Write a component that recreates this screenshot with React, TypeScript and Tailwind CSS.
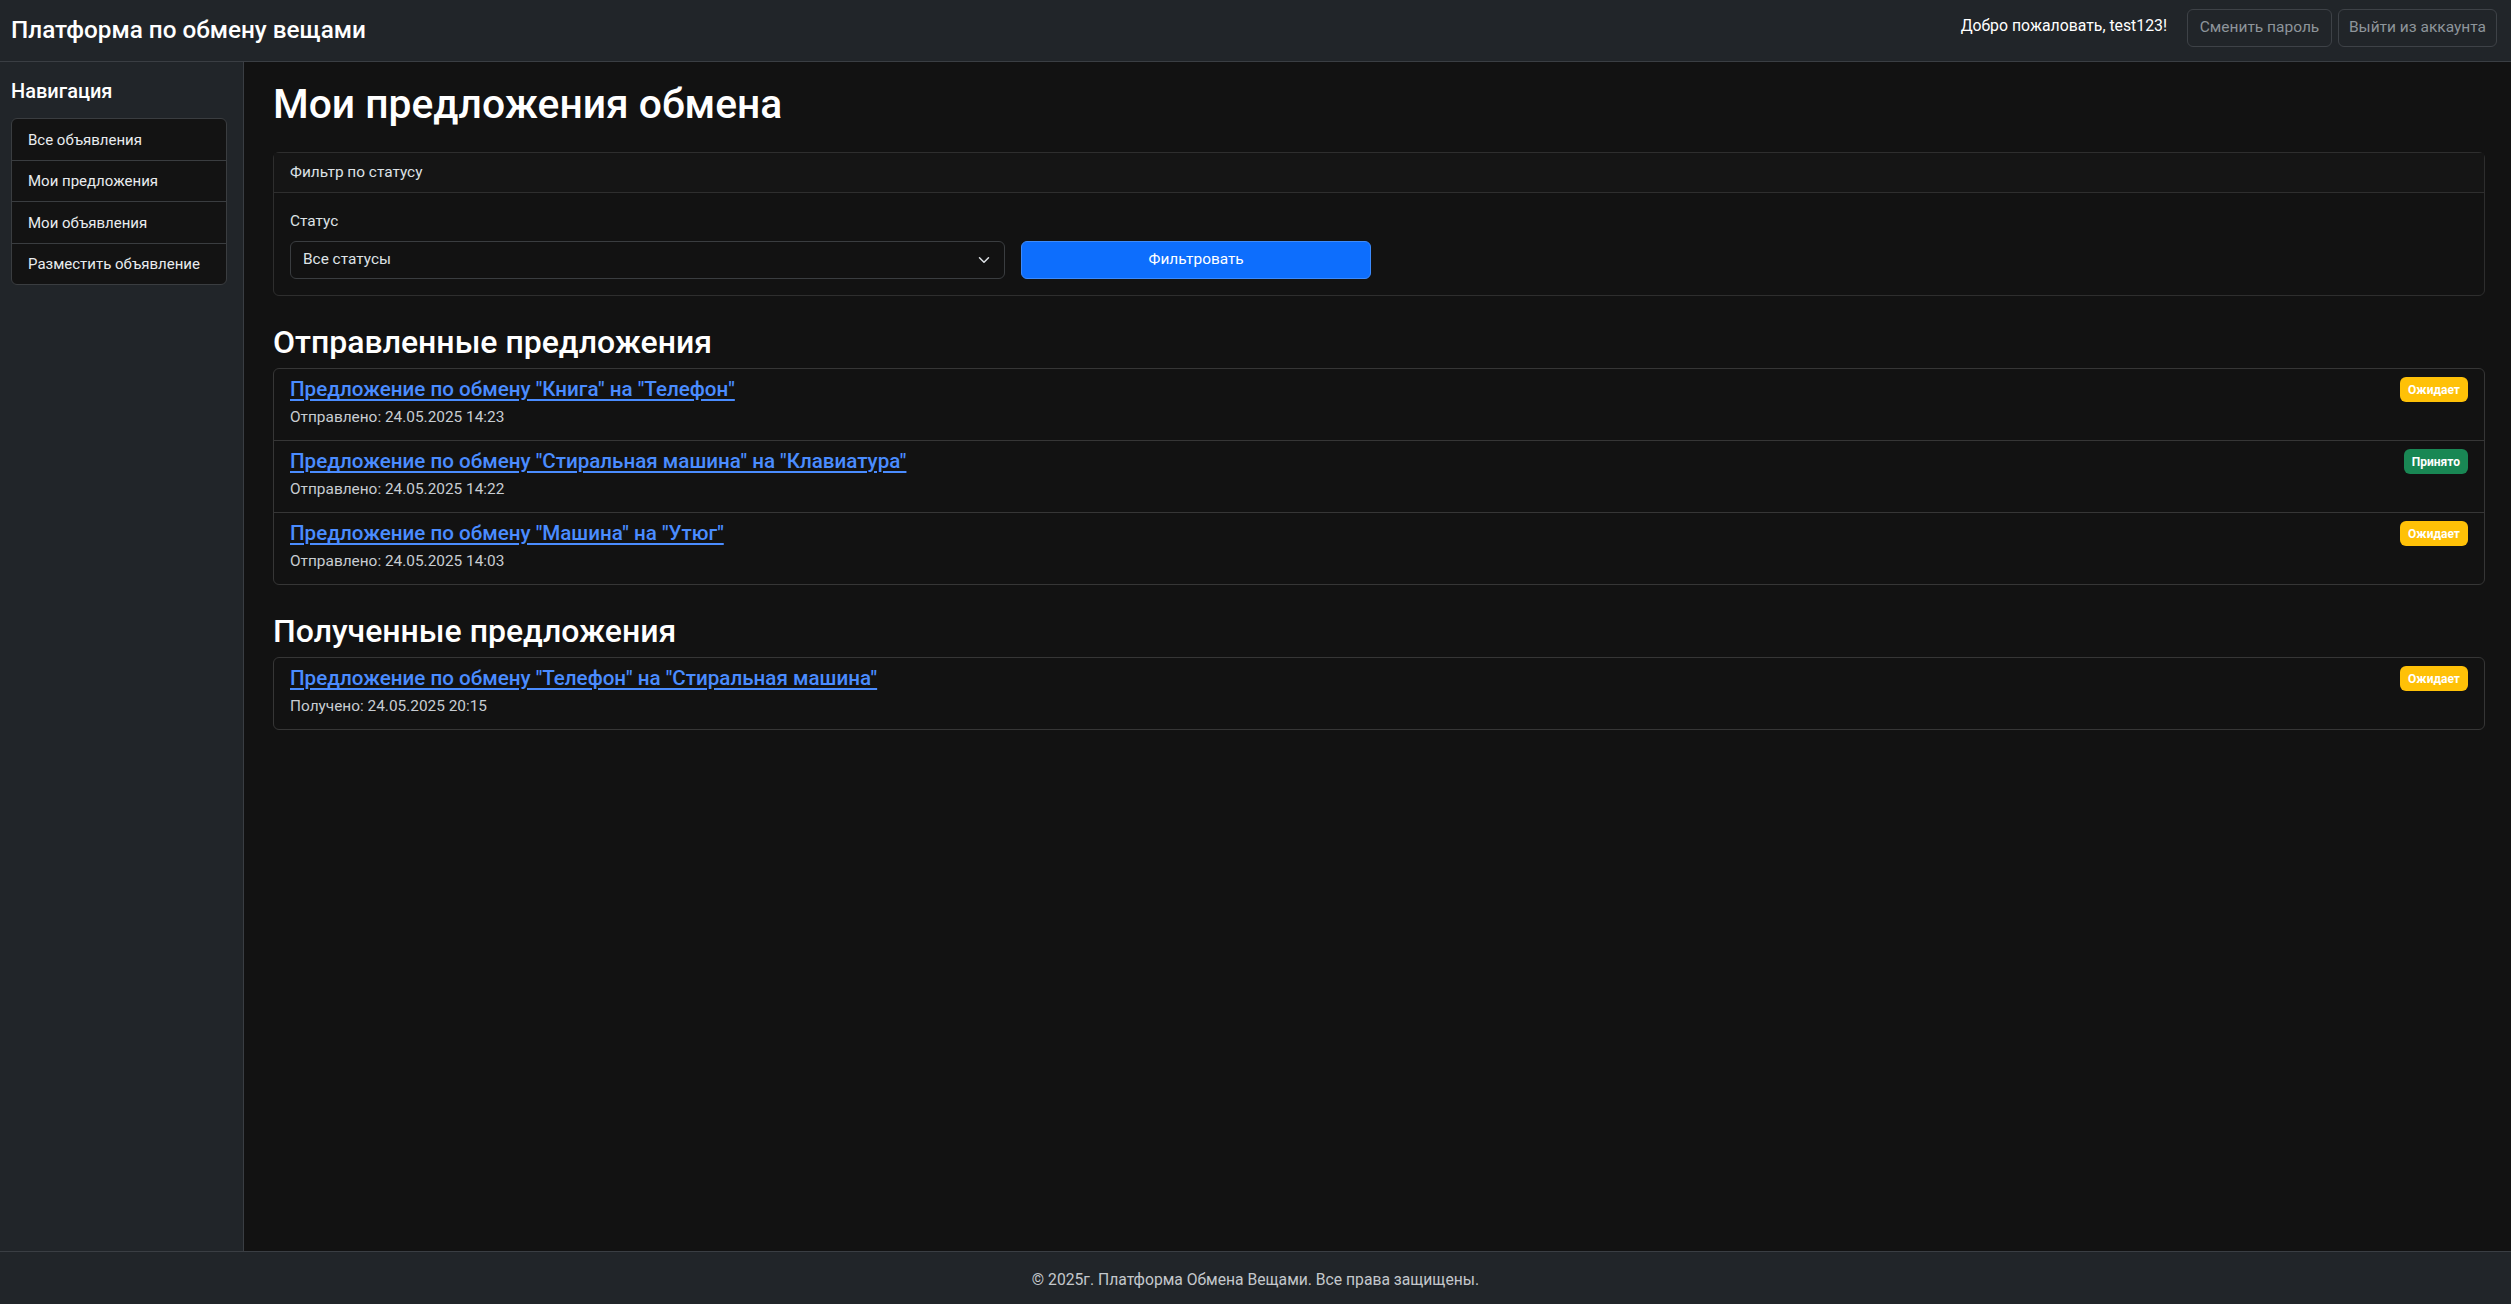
import React from "react";

type Offer = { title: string; date: string; status: "wait" | "ok" };

const sent: Offer[] = [
  { title: 'Предложение по обмену "Книга" на "Телефон"', date: "Отправлено: 24.05.2025 14:23", status: "wait" },
  { title: 'Предложение по обмену "Стиральная машина" на "Клавиатура"', date: "Отправлено: 24.05.2025 14:22", status: "ok" },
  { title: 'Предложение по обмену "Машина" на "Утюг"', date: "Отправлено: 24.05.2025 14:03", status: "wait" },
];

const received: Offer[] = [
  { title: 'Предложение по обмену "Телефон" на "Стиральная машина"', date: "Получено: 24.05.2025 20:15", status: "wait" },
];

function Badge({ status }: { status: "wait" | "ok" }) {
  return status === "wait" ? (
    <span className="flex h-[25px] items-center rounded-[6px] bg-[#ffc107] px-[8px] text-[12px] font-bold text-white">
      Ожидает
    </span>
  ) : (
    <span className="flex h-[25px] items-center rounded-[6px] bg-[#198754] px-[8px] text-[12px] font-bold text-white">
      Принято
    </span>
  );
}

function OfferList({ items }: { items: Offer[] }) {
  return (
    <div className="rounded-[6px] border border-[#363636]">
      {items.map((o, i) => (
        <div
          key={i}
          className={`flex items-start justify-between px-[16px] pt-[8px] pb-[12px] ${i > 0 ? "border-t border-[#363636]" : ""}`}
        >
          <div>
            <div className="mb-[6px] text-[20.6px] font-medium leading-[24px]">
              <a href="#" className="text-[#4a8cff] underline underline-offset-[3px]">
                {o.title}
              </a>
            </div>
            <div className="text-[15.4px] leading-[21px] text-[#c8cdd2]">{o.date}</div>
          </div>
          <Badge status={o.status} />
        </div>
      ))}
    </div>
  );
}

export default function App() {
  return (
    <div className="flex min-h-screen flex-col bg-[#121212] font-['Roboto','Noto_Sans',sans-serif] text-[16px] text-[#dee2e6]">
      <header className="flex h-[62px] shrink-0 items-center justify-between border-b border-[#3a3e43] bg-[#212529] pl-[11px] pr-[14px]">
        <div className="text-[24.3px] font-medium text-white">Платформа по обмену вещами</div>
        <div className="-mt-[6px] flex items-center">
          <span className="mr-[20px] -mt-[3px] text-[15.8px] text-white">Добро пожаловать, test123!</span>
          <button className="h-[38px] w-[145px] rounded-[6px] border border-[#3e4247] text-[15.5px] text-[#8e959b]">
            Сменить пароль
          </button>
          <button className="ml-[6px] h-[38px] w-[159px] rounded-[6px] border border-[#3e4247] text-[15.5px] text-[#8e959b]">
            Выйти из аккаунта
          </button>
        </div>
      </header>

      <div className="flex flex-1">
        <aside className="w-[244px] shrink-0 border-r border-[#3a3e43] bg-[#212529] pl-[11px] pr-[16px] pt-[17px]">
          <h5 className="mb-[15px] text-[20px] font-medium leading-[24px] text-white">Навигация</h5>
          <div className="overflow-hidden rounded-[6px] border border-[#3a3d40] bg-[#131313]">
            {["Все объявления", "Мои предложения", "Мои объявления", "Разместить объявление"].map((t, i) => (
              <div
                key={t}
                className={`px-[16px] pb-[7.5px] pt-[8.5px] text-[15px] leading-[24.5px] text-[#e9ecef] ${i > 0 ? "border-t border-[#3a3d40]" : ""}`}
              >
                {t}
              </div>
            ))}
          </div>
        </aside>

        <main className="flex-1 pb-[40px] pl-[29px] pr-[26px] pt-[18px]">
          <h1 className="mb-[23px] text-[40.8px] font-medium leading-[49px] text-white">Мои предложения обмена</h1>

          <div className="rounded-[6px] border border-[#2e2e2e]">
            <div className="border-b border-[#2e2e2e] bg-[#151515] px-[16px] py-[8px] text-[15.4px] leading-[23px]">
              Фильтр по статусу
            </div>
            <div className="grid grid-cols-12 items-end gap-x-[16px] p-[16px]">
              <div className="col-span-4">
                <div className="mb-[8px] text-[15.4px] leading-[24px]">Статус</div>
                <div className="flex h-[38px] items-center justify-between rounded-[6px] border border-[#3a3d40] bg-[#121212] pl-[12px] pr-[14px] text-[15.4px]">
                  <span>Все статусы</span>
                  <svg width="12" height="12" viewBox="0 0 16 16" fill="none">
                    <path d="M2 5l6 6 6-6" stroke="#dee2e6" strokeWidth="2" strokeLinecap="round" strokeLinejoin="round" />
                  </svg>
                </div>
              </div>
              <div className="col-span-2">
                <button className="h-[38px] w-full rounded-[6px] border border-[#3d8bfd] bg-[#0d6efd] text-[15.4px] text-white">
                  Фильтровать
                </button>
              </div>
            </div>
          </div>

          <h2 className="mb-[7px] mt-[27px] text-[32px] font-medium leading-[38px] text-white">Отправленные предложения</h2>
          <OfferList items={sent} />

          <h2 className="mb-[7px] mt-[27px] text-[32px] font-medium leading-[38px] text-white">Полученные предложения</h2>
          <OfferList items={received} />
        </main>
      </div>

      <footer className="flex h-[53px] shrink-0 items-center justify-center border-t border-[#3a3e43] bg-[#212529] pt-[3px] text-[15.7px] text-[#c4c8cc]">
        © 2025г. Платформа Обмена Вещами. Все права защищены.
      </footer>
    </div>
  );
}
